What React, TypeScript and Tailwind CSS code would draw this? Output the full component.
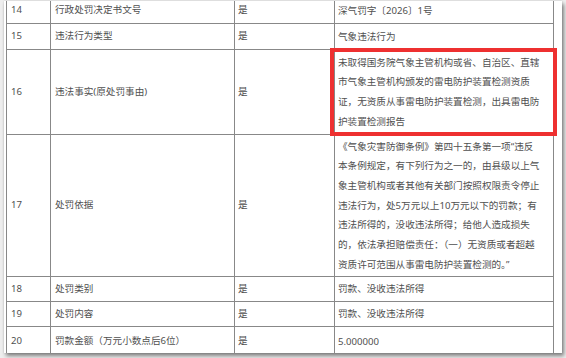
import React from "react";

type Row = { no: string; name: string; req: string; lines: string[]; h: string };

const rows: Row[] = [
  { no: "14", name: "行政处罚决定书文号", req: "是", lines: ["深气罚字〔2026〕1号"], h: "h-[26px]" },
  { no: "15", name: "违法行为类型", req: "是", lines: ["气象违法行为"], h: "h-[26px]" },
  {
    no: "16",
    name: "违法事实(原处罚事由)",
    req: "是",
    lines: [
      "未取得国务院气象主管机构或省、自治区、直辖",
      "市气象主管机构颁发的雷电防护装置检测资质",
      "证，无资质从事雷电防护装置检测，出具雷电防",
      "护装置检测报告",
    ],
    h: "h-[85px]",
  },
  {
    no: "17",
    name: "处罚依据",
    req: "是",
    lines: [
      "《气象灾害防御条例》第四十五条第一项“违反",
      "本条例规定，有下列行为之一的，由县级以上气",
      "象主管机构或者其他有关部门按照权限责令停止",
      "违法行为，处5万元以上10万元以下的罚款；有",
      "违法所得的，没收违法所得；给他人造成损失",
      "的，依法承担赔偿责任：（一）无资质或者超越",
      "资质许可范围从事雷电防护装置检测的。”",
    ],
    h: "h-[142px]",
  },
  { no: "18", name: "处罚类别", req: "是", lines: ["罚款、没收违法所得"], h: "h-[25px]" },
  { no: "19", name: "处罚内容", req: "是", lines: ["罚款、没收违法所得"], h: "h-[25px]" },
  { no: "20", name: "罚款金额（万元小数点后6位）", req: "是", lines: ["5.000000"], h: "h-[30px]" },
];

export default function App() {
  return (
    <div
      className="w-[566px] h-[358px] overflow-hidden bg-[#eeeeee] relative"
      style={{ fontFamily: '"Noto Sans", "Noto Sans CJK SC", sans-serif' }}
    >
      <div className="absolute left-[4px] top-[1px] w-[558px] h-[352px] bg-white overflow-hidden shadow-[0_0_2px_rgba(0,0,0,0.15),2px_3px_4px_rgba(0,0,0,0.45)]">
        <div className="relative ml-[2px] mt-[-4px] w-[548px] border-l border-r border-t border-[#888888] text-[9.6px] text-[#505050]">
          {rows.map((r) => (
            <div key={r.no} className={`flex border-b border-[#888888] ${r.h}`}>
              <div className="w-[44px] shrink-0 border-r border-[#888888] flex items-center pl-[4px]">{r.no}</div>
              <div className="w-[184px] shrink-0 border-r border-[#888888] flex items-center pl-[4px] whitespace-nowrap">{r.name}</div>
              <div className="w-[100px] shrink-0 border-r border-[#888888] flex items-center pl-[3px]">{r.req}</div>
              <div className="flex-1 flex flex-col justify-center pl-[3px] leading-[19.7px] whitespace-nowrap">
                {r.lines.map((l, i) => (
                  <div key={i}>{l}</div>
                ))}
              </div>
            </div>
          ))}
        </div>
        <div className="absolute left-[326px] top-[47px] w-[227px] h-[88px] border-[4px] border-[#ee3030]" />
      </div>
    </div>
  );
}
